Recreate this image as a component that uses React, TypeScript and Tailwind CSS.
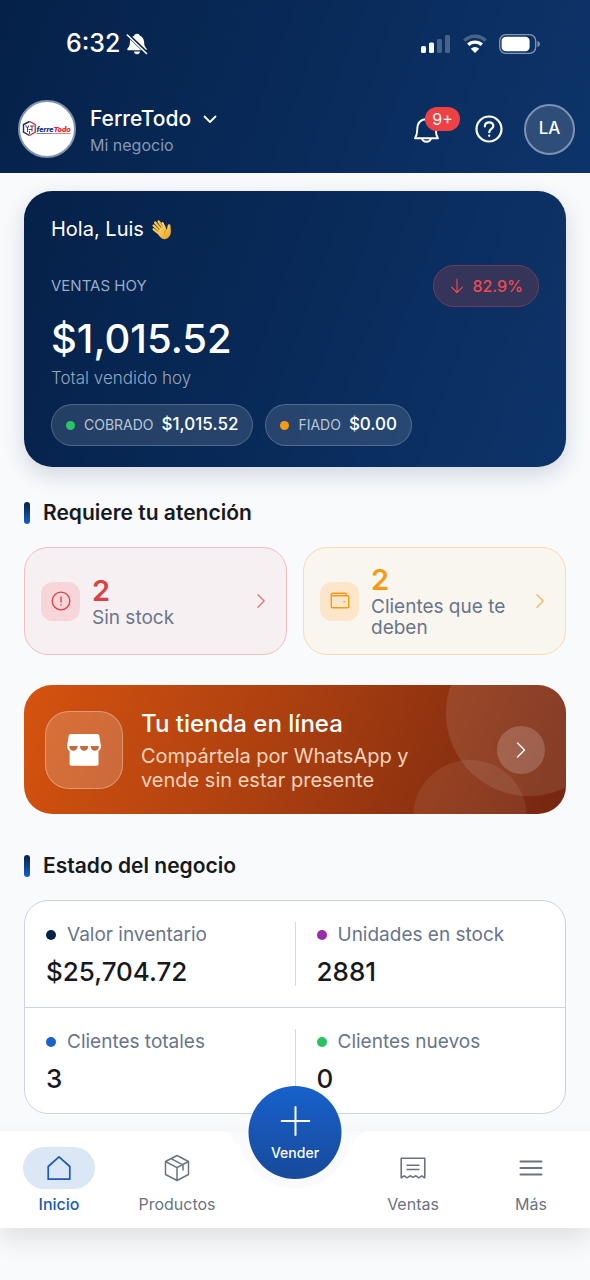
import React from "react";

const AlertIcon = () => (
  <svg viewBox="0 0 20 20" className="size-5" fill="none" stroke="currentColor" strokeWidth="1.3" strokeLinecap="round" aria-hidden="true">
    <circle cx="10" cy="10" r="8.8" />
    <path d="M10 5.8v5.2M10 13.7v.4" />
  </svg>
);

const WalletIcon = () => (
  <svg viewBox="0 0 20 20" className="size-5" fill="none" stroke="currentColor" strokeWidth="1.4" strokeLinejoin="round" strokeLinecap="round" aria-hidden="true">
    <path d="M16 4.800V2.300H2.800c-.9 0-1.500.5-1.500 1.300v12.200c0 .6.400 1 1 1h15.400c.6 0 1-.4 1-1V5.800c0-.6-.4-1-1-1H2.600c-.8 0-1.300-.5-1.300-1.200" />
    <path d="M14 10.700h.3" />
  </svg>
);

const Chevron = ({ className }: { className: string }) => (
  <svg viewBox="0 0 10 18" className={className} fill="none" stroke="currentColor" strokeWidth="1.4" strokeLinecap="round" strokeLinejoin="round" aria-hidden="true">
    <path d="M1.500 2l7 7-7 7" />
  </svg>
);

const WavingHand = () => (
  <svg viewBox="0 0 22 22" className="size-[21px]" role="img" aria-label="saludo">
    <defs>
      <linearGradient id="hand" x1="0" y1="0" x2="0.6" y2="1">
        <stop offset="0" stopColor="#ffe07a" />
        <stop offset="1" stopColor="#eeaa2b" />
      </linearGradient>
    </defs>
    <g stroke="#f9cb55" strokeWidth="2.500" strokeLinecap="round" fill="none">
      <path d="M9.200 13 2.800 7" />
      <path d="M11 11 4.400 3.800" />
      <path d="M13 9.500 8 2.600" />
      <path d="M14.500 9.500 12 4.200" stroke="#ffd867" strokeWidth="2.200" />
      <path d="M8 15 2.800 10.800" />
    </g>
    <path d="M6.500 14 13 6.800l3.400 4.200c1-1.900.6-3.800 1.400-5 .7-1 2.400-.7 2.500.6.100 1.900.5 4 .5 6.300 0 4.800-2.700 8.100-6.600 8.300-2.600.1-5.200-1.700-7.700-7.200z" fill="url(#hand)" />
    <path d="M8.400 10.900 4.200 6.800M10.300 9 6.300 4.800M12.300 7.400 9.900 4.200M7.400 12.700 4 9.600M16.400 11c-1.700.6-2.600 2.100-2.300 4" stroke="#b9720f" strokeWidth=".7" fill="none" strokeLinecap="round" />
  </svg>
);

const BellOff = () => (
  <svg viewBox="0 0 22 22" className="size-[22px]" aria-hidden="true">
    <path d="M11 .700c1.600 0 2.600.8 2.900 2 2.700 1.100 4.100 3.400 4.200 6.300.1 3.500.8 4.800 2.200 6.200.6.600.6 2.100-.6 2.100H2.300c-1.200 0-1.200-1.500-.6-2.100 1.400-1.400 2.100-2.700 2.200-6.200.1-2.900 1.500-5.200 4.200-6.300.3-1.200 1.300-2 2.900-2z" fill="white" />
    <path d="M8 18.600h6c-.3 1.700-1.400 2.700-3 2.700s-2.700-1-3-2.700z" fill="white" />
    <path d="M1.500 1.500 20.500 19.800" stroke="#06264f" strokeWidth="3.600" />
    <path d="M1.300 2 20.500 20.500" stroke="white" strokeWidth="1.600" strokeLinecap="round" />
  </svg>
);

const StatusIcons = () => (
  <div className="flex items-center gap-3" aria-hidden="true">
    <svg viewBox="0 0 30 20" className="h-5 w-[30px]" fill="white">
      <rect x="0" y="12" width="5" height="7" rx="1.500" />
      <rect x="8" y="8.500" width="5" height="10.500" rx="1.500" />
      <rect x="16" y="5" width="5" height="14" rx="1.500" opacity=".25" />
      <rect x="24" y="1" width="5" height="18" rx="1.500" opacity=".25" />
    </svg>
    <svg viewBox="0 0 24 20" className="h-5 w-6" fill="none" stroke="white" strokeWidth="3.400">
      <path d="M1.300 6.600a15.400 15.400 0 0 1 21.400 0" opacity=".25" />
      <path d="M5.200 10.800a9.900 9.900 0 0 1 13.600 0" />
      <path d="M12 19 7.800 14.700a6 6 0 0 1 8.400 0z" fill="white" stroke="none" />
    </svg>
    <svg viewBox="0 0 42 20" className="h-5 w-[42px]">
      <rect x=".7" y=".7" width="36" height="18.600" rx="6" fill="none" stroke="white" strokeWidth="1.300" opacity=".5" />
      <rect x="2.600" y="2.700" width="28" height="14.600" rx="4.200" fill="white" />
      <path d="M38.500 7v6c1.500-.5 2.400-1.600 2.400-3s-.9-2.500-2.400-3z" fill="white" opacity=".5" />
    </svg>
  </div>
);

const Logo = () => (
  <span className="flex size-[58px] shrink-0 items-center justify-center rounded-full border-2 border-[#8392ad] bg-white">
    <svg viewBox="0 0 52 20" className="h-5 w-[52px]" role="img" aria-label="FerreTodo">
      <g fill="none" strokeWidth="1.400">
        <path d="M8.500 2.500 2.500 5.500v7.500l6 3.500" stroke="#1c2f63" />
        <path d="M8.500 2.500l5.700 3v7.500l-5.700 3.500" stroke="#c9363c" />
        <path d="M4.500 6.500l2 2.500 1.500-2.500M6.500 9v4M9 7h4M11 7v5.500M7.500 10.500h3M8.500 12v3" stroke="#4a4f63" strokeWidth="1.100" />
      </g>
      <text x="15.500" y="12.700" fontFamily="Roboto, sans-serif" fontSize="8" fontWeight="900" fontStyle="italic" fill="#1d3272">
        ferre<tspan fill="#dd2430">Todo</tspan>
      </text>
      <path d="M15.500 14.500h16" stroke="#1d3272" strokeWidth=".6" />
      <path d="M31.500 14.500h18" stroke="#dd2430" strokeWidth=".6" />
    </svg>
  </span>
);

function SectionTitle({ children }: { children: React.ReactNode }) {
  return (
    <h2 className="flex items-center gap-[13px] text-[21px] leading-[26px] font-semibold text-[#17191d]">
      <span className="h-[22px] w-[6px] rounded-full bg-linear-to-b from-[#06224a] to-[#1560cc]" />
      {children}
    </h2>
  );
}

function Chip({ dot, label, value }: { dot: string; label: string; value: string }) {
  return (
    <div className="flex h-[42px] items-center rounded-full border border-white/20 bg-white/12 px-[14px]">
      <span className={`size-[9px] rounded-full ${dot}`} />
      <span className="ml-[9px] text-sm text-[#b9c5d8]">{label}</span>
      <span className="ml-2 text-[17px] font-medium text-white">{value}</span>
    </div>
  );
}

function Alert({ tone, tile, chevron, icon, count, label }: { tone: string; tile: string; chevron: string; icon: React.ReactNode; count: string; label: string }) {
  return (
    <a href="#" className={`flex min-h-[108px] flex-1 items-center rounded-3xl border pr-5 pl-4 ${tone}`}>
      <span className={`flex size-[39px] shrink-0 items-center justify-center rounded-xl ${tile}`}>{icon}</span>
      <span className="ml-3 flex flex-1 flex-col">
        <span className="text-[29px] leading-8 font-semibold">{count}</span>
        <span className="text-[19px] leading-[21px] text-[#69758b]">{label}</span>
      </span>
      <Chevron className={`h-4 w-[10px] shrink-0 ${chevron}`} />
    </a>
  );
}

function Stat({ dot, label, value, divided }: { dot: string; label: string; value: string; divided?: boolean }) {
  return (
    <div className={`flex-1 pl-[21px] ${divided ? "border-l border-[#d4d9e3]" : ""}`}>
      <dt className="flex items-center gap-[11px] text-[19px] leading-[26px] text-[#69758b]">
        <span className={`size-[10px] rounded-full ${dot}`} />
        {label}
      </dt>
      <dd className="pt-[10px] text-[26px] leading-7 font-medium text-[#17191d]">{value}</dd>
    </div>
  );
}

function NavItem({ icon, label, active }: { icon: React.ReactNode; label: string; active?: boolean }) {
  return (
    <a href="#" className={`flex flex-1 flex-col items-center ${active ? "font-medium text-[#1b5ab5]" : "text-[#6b7382]"}`}>
      <span className={`flex h-[42px] w-[72px] items-center justify-center rounded-full ${active ? "bg-[#dce7f6]" : ""}`}>{icon}</span>
      <span className="mt-1 text-base leading-[22px]">{label}</span>
    </a>
  );
}

export default function App() {
  return (
    <div className="flex min-h-screen flex-col bg-[#f8fafc] font-['Inter',sans-serif] antialiased">
      <header className="bg-linear-110 from-[#052149] to-[#0d346a] px-[15px] pb-[15px] pl-[18px] text-white">
        <div className="flex h-[88px] items-center justify-between pr-[34px] pl-12">
          <div className="flex items-center gap-[6px]">
            <time className="text-[25px] font-medium">6:32</time>
            <BellOff />
          </div>
          <StatusIcons />
        </div>
        <div className="flex items-center pt-3">
          <Logo />
          <div className="ml-[14px] flex-1 pt-1">
            <button type="button" className="flex items-center gap-3 text-[21px] leading-7 font-medium">
              FerreTodo
              <svg viewBox="0 0 14 9" className="h-[9px] w-[14px]" fill="none" stroke="currentColor" strokeWidth="1.800" strokeLinecap="round" strokeLinejoin="round" aria-hidden="true">
                <path d="M1.500 1.500 7 7l5.500-5.500" />
              </svg>
            </button>
            <p className="text-base leading-6 text-[#8797b3]">Mi negocio</p>
          </div>
          <div className="flex items-center">
            <button type="button" aria-label="Notificaciones" className="relative mr-[33px]">
              <svg viewBox="0 0 30 32" className="h-8 w-[30px]" fill="none" stroke="currentColor" strokeWidth="1.900" strokeLinejoin="round" aria-hidden="true">
                <path d="M3 25.200c1.700-2.300 2.200-4.500 2.200-8.200 0-6.500 3.100-10.700 9.300-10.700s9.300 4.200 9.300 10.700c0 3.700.5 5.900 2.200 8.200z" />
                <path d="M10 25.700c.6 1.900 2.200 3 4.500 3s3.900-1.100 4.500-3" />
              </svg>
              <span className="absolute -top-[6px] left-[13px] flex h-6 w-[35px] items-center justify-center rounded-full bg-[#ee4145] text-base">9+</span>
            </button>
            <button type="button" aria-label="Ayuda" className="mr-[21px]">
              <svg viewBox="0 0 28 28" className="size-7" fill="none" stroke="currentColor" strokeWidth="2.200" strokeLinecap="round" aria-hidden="true">
                <circle cx="14" cy="14" r="12.500" />
                <path d="M9.800 11.300c.2-2.500 1.800-3.900 4.300-3.900s4.200 1.500 4.200 3.600c0 3-4 3-4 6.200M14.200 20.600v.2" />
              </svg>
            </button>
            <button type="button" className="flex size-[51px] items-center justify-center rounded-full border-2 border-[#7d93b4] bg-[#2e4d79] text-[17px] font-medium">LA</button>
          </div>
        </div>
      </header>

      <main className="px-6 pt-[18px] pb-[17px]">
        <section className="rounded-[28px] bg-linear-110 from-[#052149] to-[#0d346a] px-[27px] pt-5 pb-[21px] text-white shadow-[0_8px_22px_rgba(15,35,75,0.16)]">
          <h1 className="flex h-9 items-center gap-[7px] text-xl">
            Hola, Luis <WavingHand />
          </h1>
          <div className="mt-[18px] flex items-center justify-between">
            <p className="text-[15px] text-[#9aabc4]">VENTAS HOY</p>
            <p className="flex h-[42px] items-center gap-[7px] rounded-full border border-[#733a5d] bg-[#353459] px-[15px] text-base font-medium text-[#ee4a51]">
              <svg viewBox="0 0 16 16" className="size-4" fill="none" stroke="currentColor" strokeWidth="1.100" strokeLinecap="round" strokeLinejoin="round" aria-hidden="true">
                <path d="M8 1v13.500M2.500 9.200 8 14.500l5.500-5.300" />
              </svg>
              82.9%
            </p>
          </div>
          <p className="mt-1 text-[40px] leading-[56px] font-medium">$1,015.52</p>
          <p className="text-[17px] leading-[22px] font-light text-[#96a5be]">Total vendido hoy</p>
          <div className="mt-[15px] flex gap-3">
            <Chip dot="bg-[#27c468]" label="COBRADO" value="$1,015.52" />
            <Chip dot="bg-[#f99a14]" label="FIADO" value="$0.00" />
          </div>
        </section>

        <section className="pt-[33px]">
          <SectionTitle>Requiere tu atención</SectionTitle>
          <div className="mt-[21px] flex gap-4">
            <Alert tone="border-[#f2bdc1] bg-[#f7f0f2] text-[#dc4045]" tile="bg-[#f8d5d8]" chevron="text-[#e0737b]" icon={<AlertIcon />} count="2" label="Sin stock" />
            <Alert tone="border-[#f8dcae] bg-[#f9f6ef] text-[#f59a17]" tile="bg-[#fbe6ca]" chevron="text-[#f2b55c]" icon={<WalletIcon />} count="2" label="Clientes que te deben" />
          </div>
        </section>

        <a href="#" className="relative mt-[30px] flex h-[129px] items-center overflow-hidden rounded-[28px] bg-linear-110 from-[#d6530e] via-[#a83e10] to-[#74260f] px-[21px] text-white">
          <span className="absolute -top-[55px] -right-[46px] size-[166px] rounded-full bg-white/10" />
          <span className="absolute top-[75px] right-[39px] size-[114px] rounded-full bg-white/8" />
          <span className="flex size-[78px] shrink-0 items-center justify-center rounded-3xl border border-white/30 bg-white/18">
            <svg viewBox="0 0 36 34" className="h-[34px] w-9" aria-hidden="true">
              <path d="M5 1h26c1.500 0 2 .7 2.300 2l1.500 9c.5 3-.4 5-2.300 6v13c0 1-.6 1.700-1.700 1.700H5.300c-1.100 0-1.700-.7-1.700-1.700V18C1.700 17 .8 15 1.200 12L2.700 3c.3-1.300.8-2 2.300-2z" fill="white" />
              <path d="M3.300 13h8.200c0 2.800-1.600 4.800-4.100 4.800S3.300 15.800 3.300 13zM14 13h8.200c0 2.800-1.600 4.800-4.100 4.800S14 15.800 14 13zM24.700 13h8.200c0 2.800-1.600 4.800-4.100 4.800s-4.100-2-4.100-4.800z" fill="#c8693b" />
            </svg>
          </span>
          <span className="ml-[18px] flex flex-1 flex-col">
            <span className="text-2xl leading-8 font-medium">Tu tienda en línea</span>
            <span className="mt-1 text-xl leading-6 text-[#fbd5bd]">
              Compártela por WhatsApp y<br />vende sin estar presente
            </span>
          </span>
          <span className="relative flex size-12 shrink-0 items-center justify-center rounded-full bg-white/18">
            <Chevron className="h-[18px] w-[10px]" />
          </span>
        </a>

        <section className="pt-[39px]">
          <SectionTitle>Estado del negocio</SectionTitle>
          <dl className="mt-[21px] rounded-3xl border border-[#ccd4e2] bg-white">
            <div className="flex border-b border-[#ccd4e2] py-[21px]">
              <Stat dot="bg-[#06224a]" label="Valor inventario" value="$25,704.72" />
              <Stat dot="bg-[#9a2bab]" label="Unidades en stock" value="2881" divided />
            </div>
            <div className="flex pt-[21px] pb-5">
              <Stat dot="bg-[#1862cc]" label="Clientes totales" value="3" />
              <Stat dot="bg-[#27c160]" label="Clientes nuevos" value="0" divided />
            </div>
          </dl>
        </section>
      </main>

      <nav className="relative flex bg-white pt-4 pb-[13px] shadow-[0_12px_24px_rgba(0,0,0,0.1)]">
        <div className="pointer-events-none absolute inset-x-0 top-0 flex h-[58px] justify-center overflow-hidden" aria-hidden="true">
          <span className="size-[18px] bg-[radial-gradient(circle_at_0%_100%,#ffffff_17px,#f8fafc_18px)]" />
          <span className="h-[57px] w-[114px] rounded-b-full bg-[#f8fafc]" />
          <span className="size-[18px] bg-[radial-gradient(circle_at_100%_100%,#ffffff_17px,#f8fafc_18px)]" />
        </div>
        <NavItem
          active
          label="Inicio"
          icon={
            <svg viewBox="0 0 24 26" className="h-[26px] w-6" fill="none" stroke="currentColor" strokeWidth="1.700" strokeLinejoin="round" aria-hidden="true">
              <path d="M1.200 24.200V11.500L12 1.800l10.800 9.700v12.700z" />
            </svg>
          }
        />
        <NavItem
          label="Productos"
          icon={
            <svg viewBox="0 0 26 28" className="h-7 w-[26px]" fill="none" stroke="currentColor" strokeWidth="1.500" strokeLinejoin="round" strokeLinecap="round" aria-hidden="true">
              <path d="M13 1.500 24.500 7.500v13L13 26.500 1.500 20.500v-13zM1.500 7.500 13 13.700l11.500-6.200M13 13.700v12.800M7 4.600l12 6.300v5" />
            </svg>
          }
        />
        <div className="flex-1">
          <button type="button" className="absolute -top-[45px] left-1/2 flex size-[93px] -translate-x-1/2 flex-col items-center rounded-full bg-linear-to-b from-[#1761cc] to-[#174a9a] pt-5 text-white">
            <svg viewBox="0 0 30 30" className="size-[30px]" stroke="currentColor" strokeWidth="2" strokeLinecap="round" aria-hidden="true">
              <path d="M15 1v28M1 15h28" />
            </svg>
            <span className="mt-[7px] text-sm leading-5 font-medium">Vender</span>
          </button>
        </div>
        <NavItem
          label="Ventas"
          icon={
            <svg viewBox="0 0 26 22" className="h-[22px] w-[26px]" fill="none" stroke="currentColor" strokeWidth="1.600" strokeLinejoin="round" aria-hidden="true">
              <path d="M1.200 20.800V1.200h23.600v19.600l-2.900-2-3 2-3-2-2.900 1.600-2.900-1.600-3 2-3-2zM6.500 8.200h13M6.500 12.500h13" />
            </svg>
          }
        />
        <NavItem
          label="Más"
          icon={
            <svg viewBox="0 0 24 18" className="h-[18px] w-6" stroke="currentColor" strokeWidth="2" strokeLinecap="round" aria-hidden="true">
              <path d="M1.500 2.500h21M1.500 9h21M1.500 15.500h21" />
            </svg>
          }
        />
      </nav>
    </div>
  );
}
